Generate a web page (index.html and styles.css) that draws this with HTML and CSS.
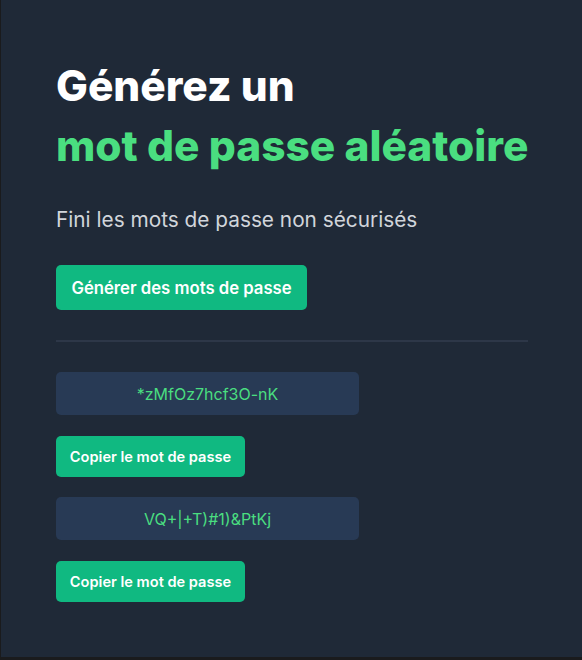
FILE: index.html
```html
<!DOCTYPE html>
<html lang="fr">
<head>
<meta charset="utf-8">
<title>Générateur de mots de passe</title>
<link rel="stylesheet" href="styles.css">
</head>
<body>
<main class="card">
  <h1 class="title">Générez un<br><span class="accent">mot de passe aléatoire</span></h1>
  <p class="subtitle">Fini les mots de passe non sécurisés</p>
  <button class="btn btn-main" type="button">Générer des mots de passe</button>
  <hr class="divider">
  <section class="results">
    <div class="pw">*zMfOz7hcf3O-nK</div>
    <button class="btn btn-copy" type="button">Copier le mot de passe</button>
    <div class="pw">VQ+|+T)#1)&amp;PtKj</div>
    <button class="btn btn-copy" type="button">Copier le mot de passe</button>
  </section>
</main>
</body>
</html>
```

FILE: styles.css
```css
html, body {
  margin: 0;
  padding: 0;
  background: #1a1b1d;
}
body {
  font-family: Inter, "Noto Sans", sans-serif;
  height: 660px;
  overflow: hidden;
}
.card {
  margin-left: 1px;
  height: 657px;
  box-sizing: border-box;
  background: #1f2937;
  padding: 56px 54px 0 55px;
  display: flex;
  flex-direction: column;
  align-items: flex-start;
}
.title {
  margin: 0;
  font-size: 42.4px;
  line-height: 60px;
  font-weight: 800;
  color: #ffffff;
  letter-spacing: 0;
  white-space: nowrap;
}
.accent {
  color: #4ade80;
}
.subtitle {
  margin: 30px 0 0;
  font-size: 20.8px;
  line-height: 28px;
  color: #d1d5db;
}
.btn {
  border: none;
  background: #10b981;
  color: #ffffff;
  font-family: inherit;
  font-weight: 600;
  border-radius: 5px;
  cursor: pointer;
  white-space: nowrap;
}
.btn-main {
  margin-top: 31px;
  height: 45px;
  padding: 0 15px;
  font-size: 16.7px;
  width: 251px;
}
.divider {
  align-self: stretch;
  margin: 30px 0 0;
  border: none;
  height: 2px;
  background: #2d3748;
}
.results {
  margin-top: 30px;
  display: flex;
  flex-direction: column;
  align-items: flex-start;
}
.pw {
  width: 303px;
  height: 43px;
  border-radius: 5px;
  background: #283a55;
  color: #4ade80;
  font-size: 16px;
  display: flex;
  align-items: center;
  justify-content: center;
}
.btn-copy {
  margin-top: 21px;
  height: 41px;
  width: 189px;
  font-size: 14.6px;
  padding: 0 12px;
}
.btn-copy + .pw {
  margin-top: 20px;
}
```
